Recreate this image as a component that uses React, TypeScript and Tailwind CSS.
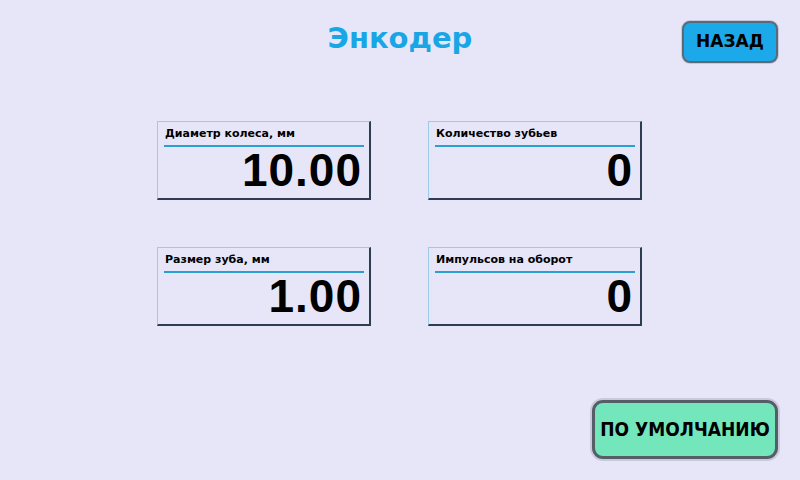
import React from "react";

const cards = [
  { label: "Диаметр колеса, мм", value: "10.00" },
  { label: "Количество зубьев", value: "0" },
  { label: "Размер зуба, мм", value: "1.00" },
  { label: "Импульсов на оборот", value: "0" },
];

function Card({ label, value }: { label: string; value: string }) {
  return (
    <div className="w-[214px] h-[79px] border-t border-l border-t-[#9ccbe8] border-l-[#9ccbe8] border-b-2 border-r-2 border-b-[#2e3e52] border-r-[#2e3e52] flex flex-col">
      <div className="shrink-0 pl-[7px] h-[22px] flex items-center text-[11px] font-bold text-black leading-none [font-family:DejaVu_Sans,sans-serif]">
        {label}
      </div>
      <div className="shrink-0 ml-[6px] mr-[5px] h-[2px] bg-[#2aa0d0] mt-[1px]" />
      <div className="flex-1 min-h-0 flex items-center justify-end pr-[7px] pb-[5px] text-[46px] font-bold tracking-[1px] text-black leading-[40px] [font-family:Liberation_Sans,Arial,sans-serif]">
        {value}
      </div>
    </div>
  );
}

export default function App() {
  return (
    <div className="w-[800px] h-[480px] bg-[#e6e6f8] flex flex-col overflow-hidden">
      <div className="grid grid-cols-[1fr_auto_1fr] items-start pt-[21px]">
        <div />
        <div className="text-[29px] font-bold text-[#19a6e6] leading-[34px] [font-family:DejaVu_Sans,sans-serif] text-center">
          Энкодер
        </div>
        <div className="flex justify-end pr-[22px]">
          <button className="w-[96px] h-[42px] rounded-[8px] bg-[#1ba9ea] border-2 border-[#5a6a78] shadow-[0_0_0_1px_#c4c8dc] flex items-center justify-center text-[17px] font-bold text-black [font-family:DejaVu_Sans,sans-serif]">
            НАЗАД
          </button>
        </div>
      </div>

      <div className="mt-[58px] ml-[157px] grid grid-cols-[214px_214px] gap-x-[57px] gap-y-[47px]">
        {cards.map((c) => (
          <Card key={c.label} label={c.label} value={c.value} />
        ))}
      </div>

      <div className="mt-auto flex justify-end pr-[22px] pb-[21px]">
        <button className="w-[186px] h-[59px] rounded-[11px] bg-[#74e6bc] border-[3px] border-[#555d66] shadow-[0_0_0_2px_#c8cadc] flex items-center justify-center whitespace-nowrap text-[19px] font-bold text-black [font-family:DejaVu_Sans_Condensed,DejaVu_Sans,sans-serif] [font-stretch:condensed]">
          ПО УМОЛЧАНИЮ
        </button>
      </div>
    </div>
  );
}
